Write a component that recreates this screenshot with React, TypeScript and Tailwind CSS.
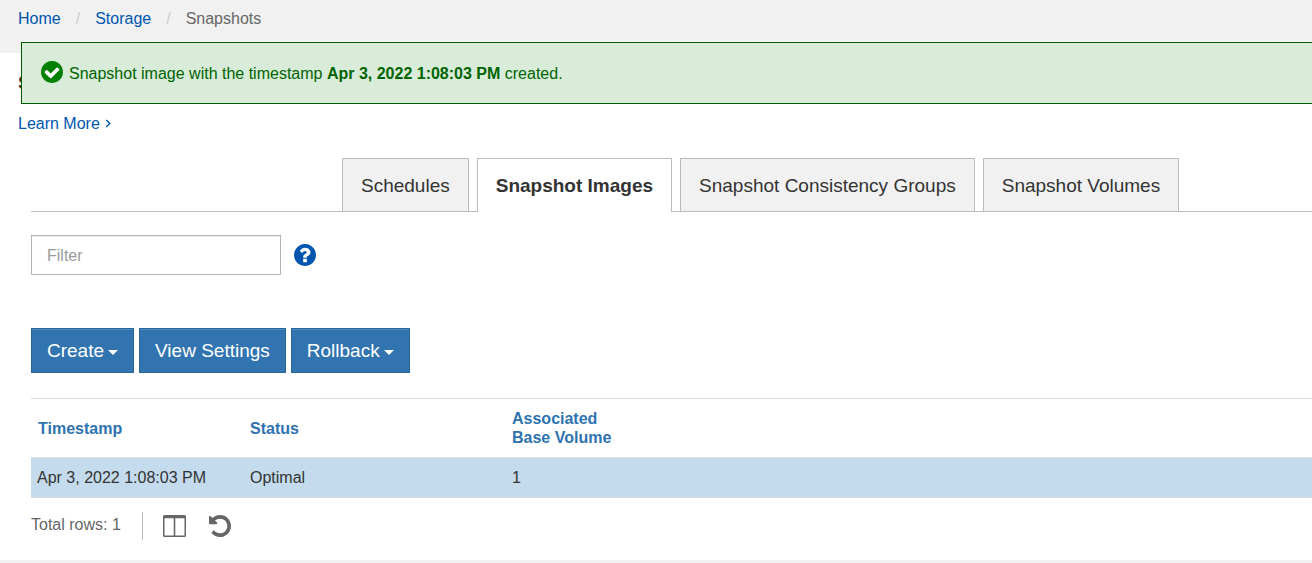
import type { ReactNode } from "react";

const CIRCLE =
  "M1664 896q0 209-103 385.5t-279.5 279.5-385.5 103-385.5-103-279.5-279.5-103-385.5 103-385.5 279.5-279.5 385.5-103 385.5 103 279.5 279.5 103 385.5z";
const CHECK =
  "M1412 734q0-28-18-46l-91-90q-19-19-45-19t-45 19l-408 407-226-226q-19-19-45-19t-45 19l-91 90q-18 18-18 46 0 27 18 45l362 362q19 19 45 19 27 0 46-19l543-543q18-18 18-45z";
const QUESTION =
  "M1024 1376v-192q0-14-9-23t-23-9h-192q-14 0-23 9t-9 23v192q0 14 9 23t23 9h192q14 0 23-9t9-23zm256-672q0-88-55.5-163t-138.5-116-170-41q-243 0-371 213-15 24 8 42l132 100q7 6 19 6 16 0 25-12 53-68 86-92 34-24 86-24 48 0 85.5 26t37.5 59q0 38-20 61t-68 45q-63 28-115.5 86.5t-52.5 125.5v36q0 14 9 23t23 9h192q14 0 23-9t9-23q0-19 21.5-49.5t54.5-49.5q32-18 49-28.5t46-35 44.5-48 28-60.5 12.5-81z";
const UNDO =
  "M1664 896q0 156-61 298t-164 245-245 164-298 61q-172 0-327-72.5t-264-204.5q-7-10-6.5-22.5t8.5-20.5l137-138q10-9 25-9 16 2 23 12 73 95 179 147t225 52q104 0 198.5-40.5t163.5-109.5 109.5-163.5 40.5-198.5-40.5-198.5-109.5-163.5-163.5-109.5-198.5-40.5q-98 0-188 35.5t-160 101.5l137 138q31 30 14 69-17 40-59 40h-448q-26 0-45-19t-19-45v-448q0-42 40-59 39-17 69 14l130 129q107-101 244.5-156.5t284.5-55.5q156 0 298 61t245 164 164 245 61 298z";

function CircleIcon({ glyph, className }: { glyph: string; className: string }) {
  return (
    <svg viewBox="128 128 1536 1536" className={`size-[22px] shrink-0 ${className}`} aria-hidden="true">
      <path d={CIRCLE} fill="currentColor" />
      <path d={glyph} fill="#fff" />
    </svg>
  );
}

function Caret() {
  return (
    <svg viewBox="0 0 10 5" className="mt-[2px] ml-1 h-[5px] w-[10px]" aria-hidden="true">
      <path d="M0 0h10L5 5z" fill="currentColor" />
    </svg>
  );
}

function ActionButton({ children }: { children: ReactNode }) {
  return (
    <button
      type="button"
      className="flex h-[45px] items-center border border-[#2b669a] bg-[#3174af] px-[15px] pt-[2px] text-[19px] text-white shadow-[inset_0_1px_0_rgba(255,255,255,0.15)]"
    >
      {children}
    </button>
  );
}

const tabs = ["Schedules", "Snapshot Images", "Snapshot Consistency Groups", "Snapshot Volumes"];
const activeTab = "Snapshot Images";

export default function App() {
  return (
    <div className="relative overflow-hidden bg-white font-['Liberation_Sans',Arial,sans-serif] text-base text-[#333]">
      <nav aria-label="Breadcrumb" className="h-[53px] bg-[#f1f1f1] pt-[7px] pl-[18px]">
        <ol className="flex leading-6">
          <li>
            <a href="#home" className="text-[#0055af]">Home</a>
          </li>
          <li className="px-[15px] text-[#ccc]" aria-hidden="true">/</li>
          <li>
            <a href="#storage" className="text-[#0055af]">Storage</a>
          </li>
          <li className="px-[15px] text-[#ccc]" aria-hidden="true">/</li>
          <li className="text-[#666]">Snapshots</li>
        </ol>
      </nav>

      <div
        role="status"
        className="absolute top-[42px] right-0 left-[21px] flex h-[62px] items-start gap-[6px] border border-r-0 border-[#005a00] bg-[#d9ebd9] pt-[18px] pl-[19px] text-[#006400]"
      >
        <CircleIcon glyph={CHECK} className="text-[#008000]" />
        <p className="leading-[26px]">
          Snapshot image with the timestamp <strong>Apr 3, 2022 1:08:03 PM</strong> created.
        </p>
      </div>

      <header className="px-[18px] pt-[14px]">
        <h1 className="text-[19px] leading-[32px] font-bold">Snapshots</h1>
        <a href="#learn" className="mt-[13px] inline-flex items-center gap-[5px] leading-6 text-[#0055af]">
          Learn More
          <svg viewBox="0 0 6 10" className="mb-[2px] h-[9px] w-[6px]" fill="none" aria-hidden="true">
            <path d="M1 1l4 4-4 4" stroke="currentColor" strokeWidth="1.5" />
          </svg>
        </a>
      </header>

      <main className="pt-[22px] pl-[31px]">
        <div role="tablist" className="flex gap-2 border-b border-[#bbb] pl-[311px]">
          {tabs.map((tab) => (
            <button
              key={tab}
              type="button"
              role="tab"
              aria-selected={tab === activeTab}
              className={
                tab === activeTab
                  ? "-mb-px h-[54px] border border-b-0 border-[#bbb] bg-white px-[18px] pt-px text-[19px] font-bold"
                  : "h-[53px] border border-b-0 border-[#bbb] bg-[#f1f1f1] px-[18px] pt-[2px] text-[19px]"
              }
            >
              {tab}
            </button>
          ))}
        </div>

        <div className="mt-[23px] flex items-center gap-[13px]">
          <input
            type="text"
            aria-label="Filter"
            placeholder="Filter"
            className="h-10 w-[250px] border border-[#b3b3b3] px-[15px] pt-[2px] shadow-[inset_0_1px_1px_rgba(0,0,0,0.075)] placeholder:text-[#999]"
          />
          <button type="button" aria-label="Filter help">
            <CircleIcon glyph={QUESTION} className="text-[#0055af]" />
          </button>
        </div>

        <div className="mt-[53px] flex gap-[5px]">
          <ActionButton>
            Create <Caret />
          </ActionButton>
          <ActionButton>View Settings</ActionButton>
          <ActionButton>
            Rollback <Caret />
          </ActionButton>
        </div>

        <table className="mt-[25px] w-full table-fixed border-separate border-spacing-0 text-left">
          <colgroup>
            <col className="w-[213px]" />
            <col className="w-[262px]" />
            <col />
          </colgroup>
          <thead className="leading-[19px] text-[#2f72b0]">
            <tr className="h-[59px]">
              <th className="border-t border-[#ddd] px-[7px]">Timestamp</th>
              <th className="border-t border-[#ddd] px-[6px]">Status</th>
              <th className="border-t border-[#ddd] px-[6px]">
                Associated
                <br />
                Base Volume
              </th>
            </tr>
          </thead>
          <tbody>
            <tr className="h-[41px] bg-[#c3dbec]">
              <td className="border-y border-[#ddd] px-[6px]">Apr 3, 2022 1:08:03 PM</td>
              <td className="border-y border-[#ddd] px-[6px]">Optimal</td>
              <td className="border-y border-[#ddd] px-[6px]">1</td>
            </tr>
          </tbody>
        </table>

        <div className="flex h-[62px] items-start pt-[14px] text-[#666]">
          <span className="leading-[26px]">Total rows: 1</span>
          <div className="ml-[21px] flex h-7 items-center gap-[23px] border-l border-[#bbb] pl-5">
            <button type="button" aria-label="Choose columns">
              <svg viewBox="0 0 23 22" className="h-[22px] w-[23px]" fill="currentColor" aria-hidden="true">
                <path
                  fillRule="evenodd"
                  d="M1.500 0h20a1.500 1.500 0 0 1 1.500 1.500v19a1.500 1.500 0 0 1-1.500 1.500h-20a1.500 1.500 0 0 1-1.500-1.500v-19a1.500 1.500 0 0 1 1.500-1.500zM1.500 3.200v17.200h9.200v-17.200zM12.300 3.200v17.200h9.200v-17.200z"
                />
              </svg>
            </button>
            <button type="button" aria-label="Reset">
              <svg viewBox="128 128 1536 1536" className="size-[22px]" fill="currentColor" aria-hidden="true">
                <path d={UNDO} />
              </svg>
            </button>
          </div>
        </div>
      </main>
      <footer className="h-[3px] bg-[#f1f1f1]" />
    </div>
  );
}
